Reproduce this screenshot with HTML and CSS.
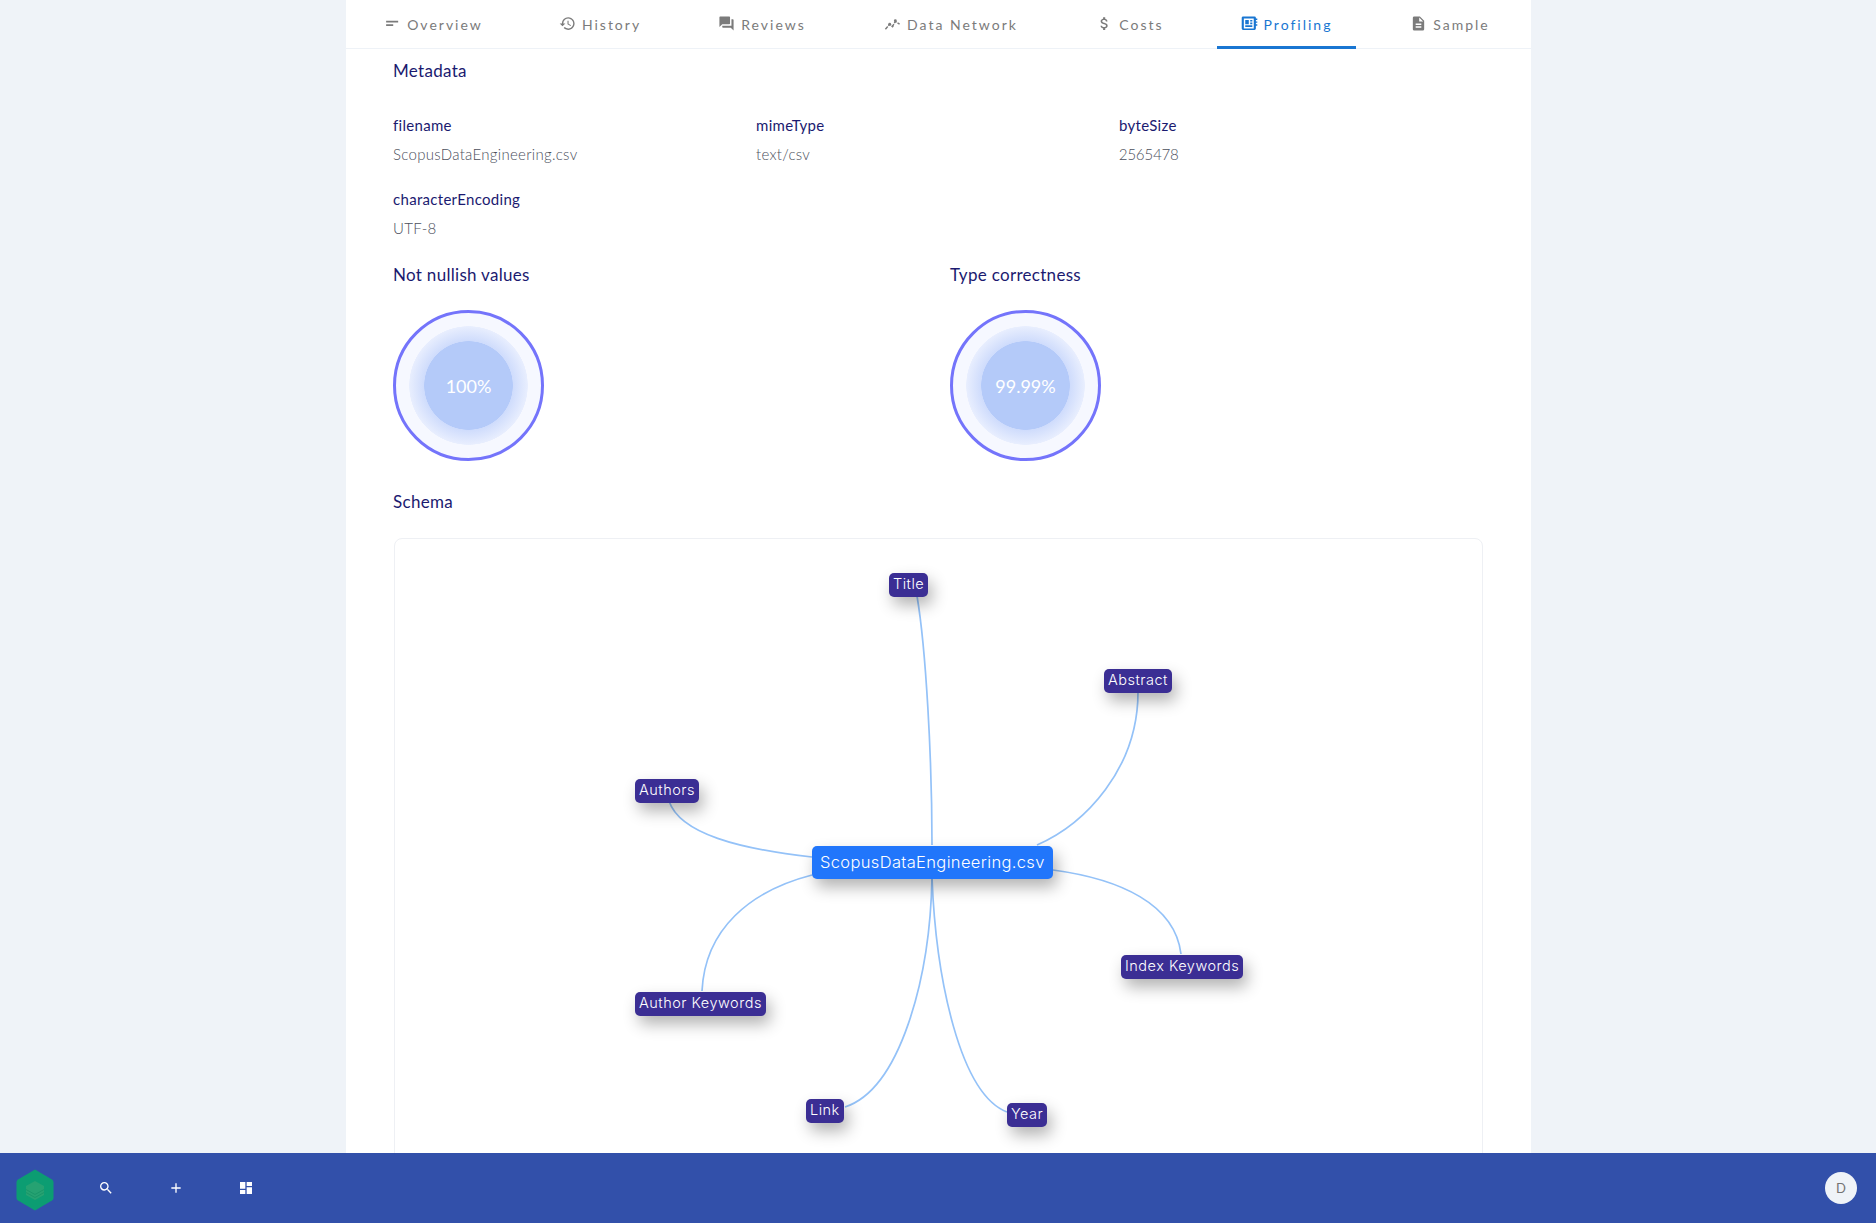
FILE: index.html
```html
<!DOCTYPE html>
<html lang="en">
<head>
    <meta charset="UTF-8">
    <title>Profiling</title>
    <link rel="stylesheet" href="styles.css">
</head>
<body>
    <main class="panel">
        <nav class="tabs">
            <a class="tab tab-overview">
                <svg class="tab-icon" viewBox="0 0 24 24"><path d="M3 8h17v2.500H3zM3 13h10v2.500H3z"/></svg>Overview
            </a>
            <a class="tab tab-history">
                <svg class="tab-icon" viewBox="0 0 24 24"><path d="M13 3a9 9 0 0 0-9 9H1l3.900 3.900L9 12H6a7 7 0 1 1 2.050 4.950l-1.420 1.420A9 9 0 1 0 13 3zm-1 5v5l4.300 2.500.7-1.200-3.500-2.100V8z"/></svg>History
            </a>
            <a class="tab tab-reviews">
                <svg class="tab-icon" viewBox="0 0 24 24"><path d="M21 6h-2v9H6v2c0 .55.45 1 1 1h11l4 4V7c0-.55-.45-1-1-1zm-4 6V3c0-.55-.45-1-1-1H3c-.55 0-1 .45-1 1v14l4-4h10c.55 0 1-.45 1-1z"/></svg>Reviews
            </a>
            <a class="tab tab-network">
                <svg class="tab-icon" viewBox="0 0 24 24"><path d="M2 20l6-7 4 3 4-7 6 4" fill="none" stroke="currentColor" stroke-width="2" stroke-dasharray="5 1.500"/><circle cx="8" cy="13" r="2"/><circle cx="16" cy="8" r="2"/><circle cx="12" cy="16" r="1.500"/></svg>Data Network
            </a>
            <a class="tab tab-costs">
                <svg class="tab-icon" viewBox="0 0 24 24"><path d="M11.800 10.900c-2.270-.59-3-1.200-3-2.150 0-1.090 1.010-1.850 2.700-1.850 1.780 0 2.440.85 2.500 2.100h2.210c-.07-1.720-1.120-3.300-3.210-3.810V3h-3v2.160c-1.940.42-3.500 1.680-3.500 3.610 0 2.310 1.910 3.460 4.700 4.130 2.500.6 3 1.480 3 2.410 0 .69-.49 1.790-2.700 1.790-2.060 0-2.870-.92-2.980-2.100h-2.200c.12 2.190 1.760 3.420 3.680 3.830V21h3v-2.150c1.950-.37 3.500-1.500 3.500-3.550 0-2.840-2.430-3.810-4.700-4.400z"/></svg>Costs
            </a>
            <a class="tab tab-profiling active">
                <svg class="tab-icon" viewBox="0 0 24 24"><path fill-rule="evenodd" d="M3 2h16a2 2 0 0 1 2 2v1h2v2h-2v2h2v2h-2v2h2v2h-2v4a2 2 0 0 1-2 2H3a2 2 0 0 1-2-2V4a2 2 0 0 1 2-2zm1 3v14h14V5zm2 2h5v6H6zm7 0h3v2h-3zm0 3.500h3v2.500h-3zM6 14.500h10V17H6z"/></svg>Profiling
            </a>
            <a class="tab tab-sample">
                <svg class="tab-icon" viewBox="0 0 24 24"><path d="M14 2H6a2 2 0 0 0-2 2v16a2 2 0 0 0 2 2h12a2 2 0 0 0 2-2V8zm2 16H8v-2h8zm0-4H8v-2h8zm-3-5V3.500L18.500 9z"/></svg>Sample
            </a>
        </nav>

        <section class="content">
            <h2 class="title title-meta">Metadata</h2>
            <div class="meta-grid">
                <div class="meta-item">
                    <div class="meta-key">filename</div>
                    <div class="meta-value">ScopusDataEngineering.csv</div>
                </div>
                <div class="meta-item">
                    <div class="meta-key">mimeType</div>
                    <div class="meta-value">text/csv</div>
                </div>
                <div class="meta-item">
                    <div class="meta-key">byteSize</div>
                    <div class="meta-value">2565478</div>
                </div>
                <div class="meta-item">
                    <div class="meta-key">characterEncoding</div>
                    <div class="meta-value">UTF-8</div>
                </div>
            </div>

            <div class="gauges">
                <div class="gauge-col">
                    <h2 class="title">Not nullish values</h2>
                    <div class="gauge"><div class="gauge-core">100%</div></div>
                </div>
                <div class="gauge-col">
                    <h2 class="title">Type correctness</h2>
                    <div class="gauge"><div class="gauge-core">99.99%</div></div>
                </div>
            </div>

            <h2 class="title title-schema">Schema</h2>
            <div class="graph">
                <svg class="edges" width="1088" height="700" viewBox="394 539 1088 700">
                    <path d="M917 597 C926 650 932 760 932 846"/>
                    <path d="M1138 693 C1138 770 1085 825 1037 846"/>
                    <path d="M669 802 C680 835 740 850 812 858"/>
                    <path d="M812 876 C750 892 705 930 702 992"/>
                    <path d="M1053 871 C1120 880 1175 905 1181 955"/>
                    <path d="M932 879 C930 980 900 1090 845 1108"/>
                    <path d="M932 879 C936 980 960 1095 1007 1113"/>
                </svg>
                <div class="node node-main" style="left:417px;top:307px">ScopusDataEngineering.csv</div>
                <div class="node" style="left:494px;top:34px">Title</div>
                <div class="node" style="left:709px;top:130px">Abstract</div>
                <div class="node" style="left:240px;top:240px">Authors</div>
                <div class="node" style="left:240px;top:453px">Author Keywords</div>
                <div class="node" style="left:726px;top:416px">Index Keywords</div>
                <div class="node" style="left:411px;top:560px">Link</div>
                <div class="node" style="left:612px;top:564px">Year</div>
            </div>
        </section>
    </main>

    <footer class="bottombar">
        <svg class="logo" viewBox="0 0 40 44">
            <path d="M20 1.500l17 10q1.500 1 1.500 2.500v16q0 1.500-1.500 2.500l-17 10-17-10q-1.500-1-1.500-2.500V14q0-1.500 1.500-2.500z" fill="#0c9d72"/>
            <path d="M20 13l9 5v9l-9 5-9-5v-9z" fill="#26a272"/>
            <path d="M11 21.500l9 5 9-5M11 24.500l9 5 9-5" fill="none" stroke="#1a9669" stroke-width="1"/>
        </svg>
        <svg class="bar-icon icon-search" viewBox="0 0 24 24"><path d="M15.500 14h-.79l-.28-.27A6.470 6.470 0 0 0 16 9.500 6.500 6.500 0 1 0 9.500 16c1.610 0 3.090-.59 4.230-1.570l.27.28v.79l5 4.990L20.490 19zm-6 0C7.010 14 5 11.990 5 9.500S7.010 5 9.500 5 14 7.010 14 9.500 11.990 14 9.500 14z"/></svg>
        <svg class="bar-icon icon-plus" viewBox="0 0 24 24"><path d="M19 13h-6v6h-2v-6H5v-2h6V5h2v6h6z"/></svg>
        <svg class="bar-icon icon-dash" viewBox="0 0 24 24"><path d="M3 13h8V3H3zm0 8h8v-6H3zm10 0h8V11h-8zm0-18v6h8V3z"/></svg>
        <div class="avatar">D</div>
    </footer>
</body>
</html>
```

FILE: styles.css
```css
* {
    box-sizing: border-box;
}
html, body {
    height: 1223px;
    overflow: hidden;
}
body {
    margin: 0;
    background: #eff3f8;
    font-family: "Lato", "Noto Sans", sans-serif;
}
.panel {
    width: 1185px;
    height: 1223px;
    margin-left: 346px;
    background: white;
}
.tabs {
    display: flex;
    height: 49px;
    border-bottom: 1px solid #eef2f7;
}
.tab {
    display: flex;
    flex: none;
    align-items: center;
    justify-content: center;
    gap: 6px;
    height: 49px;
    color: #7b7b7b;
    font-size: 14px;
    letter-spacing: 2px;
}
.tab-icon {
    width: 17px;
    height: 17px;
    fill: currentColor;
    margin-top: -2px;
}
.tab-overview { width: 175px; }
.tab-history { width: 158px; }
.tab-reviews { width: 166px; }
.tab-network { width: 212px; }
.tab-costs { width: 146px; }
.tab-profiling { width: 139px; margin-left: 14px; }
.tab-sample { width: 162px; margin-left: 13px; }
.active {
    color: #1976d2;
    border-bottom: 3px solid #1976d2;
    border-radius: 3px 3px 0 0;
    padding-top: 3px;
}
.content {
    padding: 0 47px;
}
.title {
    margin: 0;
    font-size: 17px;
    line-height: 22px;
    font-weight: 400;
    letter-spacing: 0.3px;
    color: #1b1a70;
}
.title-meta {
    margin-top: 11px;
}
.meta-grid {
    display: grid;
    grid-template-columns: repeat(3, 363px);
    row-gap: 25px;
    margin-top: 33px;
}
.meta-key {
    font-size: 15px;
    line-height: 20px;
    letter-spacing: 0.3px;
    color: #1b1a70;
}
.meta-value {
    margin-top: 9px;
    font-size: 15px;
    font-weight: 300;
    font-variant-numeric: proportional-nums;
    line-height: 20px;
    letter-spacing: 0.3px;
    color: #4b4f5c;
}
.gauges {
    display: grid;
    grid-template-columns: 557px 1fr;
    margin-top: 26px;
}
.gauge {
    display: flex;
    align-items: center;
    justify-content: center;
    width: 151px;
    height: 151px;
    margin-top: 24px;
    border: 3px solid #7474fb;
    border-radius: 50%;
    background: radial-gradient(circle, #b4caf9 0, #b4caf9 44px, #cfdcfc 44.500px, #e8eefe 59px, #f6f8ff 59.500px);
}
.gauge-core {
    color: white;
    font-size: 18px;
}
.title-schema {
    margin-top: 30px;
}
.graph {
    position: relative;
    width: 1089px;
    height: 700px;
    margin-top: 25px;
    margin-left: 1px;
    border: 1px solid #eef0f4;
    border-radius: 8px;
}
.edges {
    position: absolute;
    left: -1px;
    top: -1px;
}
.edges path {
    fill: none;
    stroke: #94c2f8;
    stroke-width: 1.700;
}
.node {
    position: absolute;
    padding: 0 4px;
    height: 24px;
    line-height: 22px;
    background: #3b2e94;
    border-radius: 5px;
    color: white;
    font-family: "Inter", "Noto Sans", sans-serif;
    font-size: 14.500px;
    font-weight: 300;
    letter-spacing: 0.5px;
    white-space: nowrap;
    box-shadow: 4px 8px 16px rgba(0,0,0,0.3);
}
.node-main {
    padding: 0 8px;
    height: 33px;
    line-height: 32px;
    background: #2176fb;
    font-size: 16.500px;
    letter-spacing: 0.35px;
}
.bottombar {
    position: fixed;
    left: 0;
    right: 0;
    bottom: 0;
    display: flex;
    align-items: center;
    height: 70px;
    padding-right: 19px;
    background: #3250aa;
}
.logo {
    width: 40px;
    height: 44px;
    margin-left: 15px;
    margin-top: 4px;
}
.bar-icon {
    width: 16px;
    height: 16px;
    fill: white;
}
.icon-search { margin-left: 43px; }
.icon-plus { margin-left: 54px; }
.icon-dash { margin-left: 54px; }
.avatar {
    display: flex;
    align-items: center;
    justify-content: center;
    width: 32px;
    height: 32px;
    margin-left: auto;
    border-radius: 50%;
    background: #eff3f8;
    color: #737373;
    font-size: 13px;
}
```
